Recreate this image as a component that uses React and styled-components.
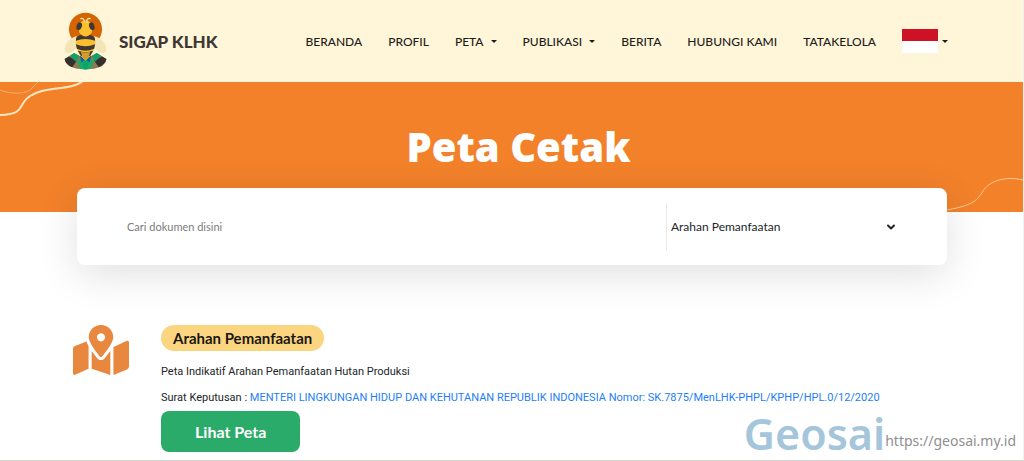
import { useState } from "react";
import styled, { createGlobalStyle } from "styled-components";
import { FaMapMarkedAlt } from "react-icons/fa";
import { ChevronDown } from "lucide-react";

const menu = [
  { label: "BERANDA" },
  { label: "PROFIL" },
  { label: "PETA", dropdown: true },
  { label: "PUBLIKASI", dropdown: true },
  { label: "BERITA" },
  { label: "HUBUNGI KAMI" },
  { label: "TATAKELOLA" },
];

function BeeLogo() {
  return (
    <LogoSvg viewBox="44 34 128 175" aria-hidden="true">
      <circle cx="108" cy="86" r="50" fill="#d46502" />
      <path d="M82 107c-20 3-38 22-37 41 1 14 22 13 32-2 7-11 9-28 5-39z" fill="#f3e5b5" />
      <path d="M134 107c20 3 38 22 37 41-1 14-22 13-32-2-7-11-9-28-5-39z" fill="#f3e5b5" />
      <path d="M74 158q34 24 68 0l29 18q-5 31-63 31t-63-31z" fill="#8d7b4f" />
      <path d="M45 176l13-8 24 12-14 21q-20-8-23-25z" fill="#35302d" />
      <path d="M171 176l-13-8-24 12 14 21q20-8 23-25z" fill="#35302d" />
      <path d="M74 158l15 8-10 18-18-18z" fill="#12a268" />
      <path d="M142 158l-15 8 10 18 18-18z" fill="#12a268" />
      <path d="M82 182l26-13 26 13-11 24q-15 3-30 0z" fill="#17ab70" />
      <path d="M91 166q17 8 34 0l-5 20-12-8-12 8z" fill="#175ca0" />
      <path d="M99 183l9-7 9 7-4 24h-10z" fill="#0ca568" />
      <path d="M80 112q28-18 56 0 6 32-15 56l-13 12-13-12q-21-24-15-56z" fill="#fcc02e" />
      <path d="M80 112q8-10 28-10t28 10l1 9q-29-11-58 0z" fill="#403735" />
      <path d="M79 131q29 12 58 0l-3 14q-26 12-52 0z" fill="#403735" />
      <path d="M85 151q23 9 46 0l-8 14-15 6-15-6z" fill="#403735" />
      <path d="M94 154q14 5 28 0l-5 18-9 7-9-7z" fill="#d69b26" />
      <path d="M91 67q17-14 34 0l3 27q-10 14-20 14T88 94z" fill="#fcc02e" />
      <ellipse cx="89" cy="77" rx="8" ry="12" fill="#403735" transform="rotate(18 89 77)" />
      <ellipse cx="127" cy="77" rx="8" ry="12" fill="#403735" transform="rotate(-18 127 77)" />
      <path d="M104 64q1-12-10-10m18 10q-1-12 10-10" fill="none" stroke="#fae5a7" strokeWidth="4" strokeLinecap="round" />
    </LogoSvg>
  );
}

function Header() {
  return (
    <HeaderBar>
      <Brand href="#">
        <BeeLogo />
        SIGAP KLHK
      </Brand>
      <Nav>
        {menu.map((item) => (
          <NavLink key={item.label} href="#">
            {item.label}
            {item.dropdown && <Caret />}
          </NavLink>
        ))}
        <LanguageButton type="button" aria-label="Bahasa Indonesia">
          <Flag />
          <Caret />
        </LanguageButton>
      </Nav>
    </HeaderBar>
  );
}

function SearchCard() {
  const [keyword, setKeyword] = useState("");
  const [category, setCategory] = useState("arahan");

  return (
    <Card onSubmit={(e) => e.preventDefault()}>
      <SearchInput
        type="text"
        aria-label="Cari dokumen"
        placeholder="Cari dokumen disini"
        value={keyword}
        onChange={(e) => setKeyword(e.target.value)}
      />
      <SelectBox>
        <CategorySelect
          aria-label="Kategori"
          value={category}
          onChange={(e) => setCategory(e.target.value)}
        >
          <option value="arahan">Arahan Pemanfaatan</option>
        </CategorySelect>
        <ChevronDown size={12} strokeWidth={4} />
      </SelectBox>
    </Card>
  );
}

function App() {
  return (
    <Page>
      <GlobalStyle />
      <Header />
      <Hero>
        <WaveLeft viewBox="0 0 90 40" aria-hidden="true">
          <path d="M0 8C10 12 27 13 32 6L39-1" opacity=".45" strokeWidth="1" />
          <path d="M0 33C30 32 14 20 36 11 49 5 72 8 83-1" strokeWidth="2" />
        </WaveLeft>
        <Title>Peta Cetak</Title>
        <WaveRight viewBox="0 0 84 36" aria-hidden="true">
          <path d="M0 35C56 28 32 13 60 4 68 2 76 2 84 4" opacity=".7" strokeWidth="1" />
        </WaveRight>
      </Hero>
      <SearchCard />
      <Result>
        <FaMapMarkedAlt size={56} color="#e8883e" />
        <ResultBody>
          <Tag>Arahan Pemanfaatan</Tag>
          <Text>Peta Indikatif Arahan Pemanfaatan Hutan Produksi</Text>
          <Text>
            Surat Keputusan :{" "}
            <a href="#">
              MENTERI LINGKUNGAN HIDUP DAN KEHUTANAN REPUBLIK INDONESIA Nomor: SK.7875/MenLHK-PHPL/KPHP/HPL.0/12/2020
            </a>
          </Text>
          <ViewButton type="button">Lihat Peta</ViewButton>
        </ResultBody>
      </Result>
      <Watermark>
        <strong>Geosai</strong>
        <span>https://geosai.my.id</span>
      </Watermark>
    </Page>
  );
}

export default App;

const GlobalStyle = createGlobalStyle`
  * {
    box-sizing: border-box;
  }

  body {
    margin: 0;
    background: #fff;
    font-family: Lato, sans-serif;
    color: #212529;
  }
`;

const Page = styled.div`
  position: relative;
  border-right: 1px solid #f1f1f1;
  border-bottom: 1px solid #d4d2cf;
`;

const HeaderBar = styled.header`
  display: flex;
  align-items: center;
  justify-content: space-between;
  height: 82px;
  padding: 0 75px 0 64px;
  background: #fff6d9;
`;

const Brand = styled.a`
  display: flex;
  align-items: center;
  gap: 12px;
  color: #403735;
  font-size: 17px;
  font-weight: 900;
  text-decoration: none;
  white-space: nowrap;
`;

const LogoSvg = styled.svg`
  width: 43px;
  height: 58px;
`;

const Nav = styled.nav`
  display: flex;
  align-items: center;
  gap: 26px;
`;

const NavLink = styled.a`
  display: flex;
  align-items: center;
  gap: 7px;
  color: #1f1d1b;
  font-size: 12px;
  font-weight: 500;
  text-decoration: none;
  white-space: nowrap;
`;

const Caret = styled.span`
  border-top: 3px solid #1f1d1b;
  border-left: 3px solid transparent;
  border-right: 3px solid transparent;
`;

const LanguageButton = styled.button`
  display: flex;
  align-items: center;
  gap: 4px;
  padding: 0;
  border: 0;
  background: none;
`;

const Flag = styled.span`
  width: 36px;
  height: 24px;
  background: linear-gradient(#ce1126 50%, #fff 50%);
`;

const Hero = styled.section`
  position: relative;
  height: 130px;
  padding-top: 36px;
  background: #f2812a;
  text-align: center;
`;

const Title = styled.h1`
  margin: 0;
  padding-left: 14px;
  color: #fff;
  font-family: "Open Sans", sans-serif;
  font-size: 40px;
  font-weight: 800;
  line-height: 58px;
`;

const Wave = styled.svg`
  position: absolute;
  fill: none;
  stroke: #ffe5bd;
`;

const WaveLeft = styled(Wave)`
  top: 0;
  left: 0;
  width: 90px;
  height: 40px;
`;

const WaveRight = styled(Wave)`
  right: 0;
  bottom: 0;
  width: 84px;
  height: 36px;
`;

const Card = styled.form`
  position: relative;
  display: flex;
  align-items: center;
  margin: -24px 76px 0 77px;
  padding: 15px 50px 14px;
  border-radius: 8px;
  background: #fff;
  box-shadow: 0 10px 40px rgba(0, 0, 0, 0.12);
`;

const SearchInput = styled.input`
  flex: 1;
  min-width: 0;
  height: 48px;
  padding: 0 0 2px;
  border: 0;
  outline: 0;
  background: none;
  color: #212529;
  font: 11px Lato, sans-serif;

  &::placeholder {
    color: #7b7b7b;
  }
`;

const SelectBox = styled.div`
  display: flex;
  align-items: center;
  width: 30%;
  border-left: 1px solid #e8e8e8;
`;

const CategorySelect = styled.select`
  flex: 1;
  height: 48px;
  padding: 0 4px 2px;
  border: 0;
  outline: 0;
  appearance: none;
  background: none;
  color: #212529;
  font: 12px Lato, sans-serif;
`;

const Result = styled.section`
  display: flex;
  align-items: flex-start;
  gap: 32px;
  padding: 60px 73px 8px;

  > svg {
    flex-shrink: 0;
    margin-top: -3px;
  }
`;

const ResultBody = styled.div`
  display: flex;
  flex-direction: column;
  align-items: flex-start;
`;

const Tag = styled.span`
  margin-bottom: 8px;
  padding: 0 12px;
  border-radius: 13px;
  background: #fcd581;
  color: #1a1712;
  font-size: 15px;
  font-weight: 700;
  line-height: 26px;
`;

const Text = styled.p`
  margin: 0;
  font: 11px Roboto, sans-serif;
  line-height: 26px;
  white-space: nowrap;

  a {
    color: #2680f5;
    text-decoration: none;
  }
`;

const ViewButton = styled.button`
  height: 41px;
  padding: 0 34px;
  border: 0;
  border-radius: 8px;
  background: #2bab69;
  color: #fff;
  font: 700 16px Lato, sans-serif;
`;

const Watermark = styled.div`
  position: absolute;
  right: 7px;
  bottom: 0;
  display: flex;
  align-items: flex-end;
  font-family: "Noto Sans", sans-serif;

  strong {
    color: #a5c5da;
    font-size: 43px;
    font-weight: 600;
    line-height: 52px;
  }

  span {
    color: #8f8f8f;
    font-size: 14px;
    line-height: 38px;
  }
`;
